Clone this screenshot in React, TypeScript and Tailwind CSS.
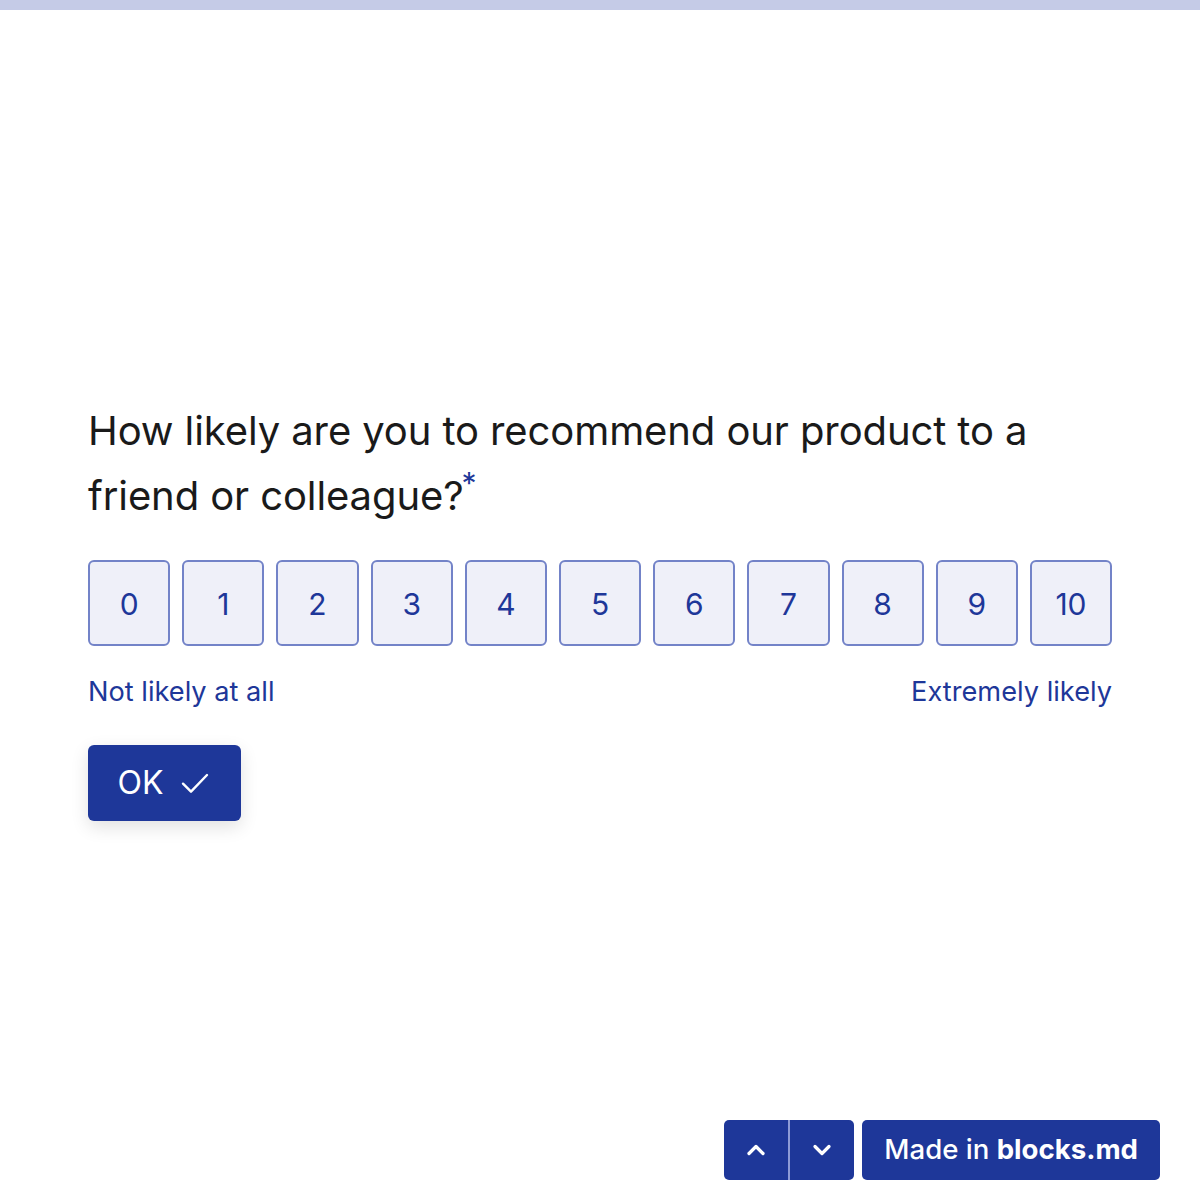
import React from "react";

export default function App() {
  const nums = [0, 1, 2, 3, 4, 5, 6, 7, 8, 9, 10];
  return (
    <div
      className="relative flex h-[1200px] w-full flex-col bg-white"
      style={{ fontFamily: "Inter, 'Noto Sans', sans-serif" }}
    >
      <div className="h-[10px] w-full bg-[#c5cbe7]" />
      <div className="flex justify-center pt-[388px]">
        <div className="w-[1024px]">
          <h1 className="text-[40px] leading-[65px] font-normal text-[#1a1a1a] tracking-[-0.1px]">
            How likely are you to recommend our product to a friend or colleague?
            <span className="relative top-[-16px] ml-[-2px] inline-block text-[30px] leading-[30px] text-[#1e3799]">*</span>
          </h1>
          <div className="mt-[32px] flex gap-[12px]">
            {nums.map((n) => (
              <button
                key={n}
                className="flex h-[86px] flex-1 items-center justify-center rounded-[6px] border-2 border-[#7383c8] bg-[#eff0f9] pt-[2px] text-[30px] text-[#1e3799]"
              >
                {n}
              </button>
            ))}
          </div>
          <div className="mt-[28px] flex justify-between text-[27.2px] leading-[36px] text-[#1e3799]">
            <span>Not likely at all</span>
            <span>Extremely likely</span>
          </div>
          <button className="mt-[35px] flex h-[76px] w-[153px] items-center justify-center gap-[16px] rounded-[6px] bg-[#1e3799] text-[32px] text-white shadow-[0_6px_18px_rgba(0,0,0,0.12)]">
            <span>OK</span>
            <svg width="32" height="32" viewBox="0 0 24 24" fill="none" stroke="white" strokeWidth="1.8" strokeLinecap="round" strokeLinejoin="round">
              <path d="M3 12.5l6 6L21 6" />
            </svg>
          </button>
        </div>
      </div>
      <div className="absolute bottom-[20px] right-[40px] flex gap-[8px]">
        <div className="flex h-[60px] overflow-hidden rounded-[5px] bg-[#1e3799]">
          <button className="flex w-[64px] items-center justify-center">
            <svg width="28" height="28" viewBox="0 0 24 24" fill="none" stroke="white" strokeWidth="2.8" strokeLinecap="round" strokeLinejoin="round">
              <path d="M6 15l6-6 6 6" />
            </svg>
          </button>
          <div className="w-[2px] bg-[#8e9bd6]" />
          <button className="flex w-[64px] items-center justify-center">
            <svg width="28" height="28" viewBox="0 0 24 24" fill="none" stroke="white" strokeWidth="2.8" strokeLinecap="round" strokeLinejoin="round">
              <path d="M6 9l6 6 6-6" />
            </svg>
          </button>
        </div>
        <div className="flex h-[60px] items-center rounded-[5px] bg-[#1e3799] px-[22px] text-[27.6px] font-medium text-white">
          Made in&nbsp;<span className="font-bold">blocks.md</span>
        </div>
      </div>
    </div>
  );
}
